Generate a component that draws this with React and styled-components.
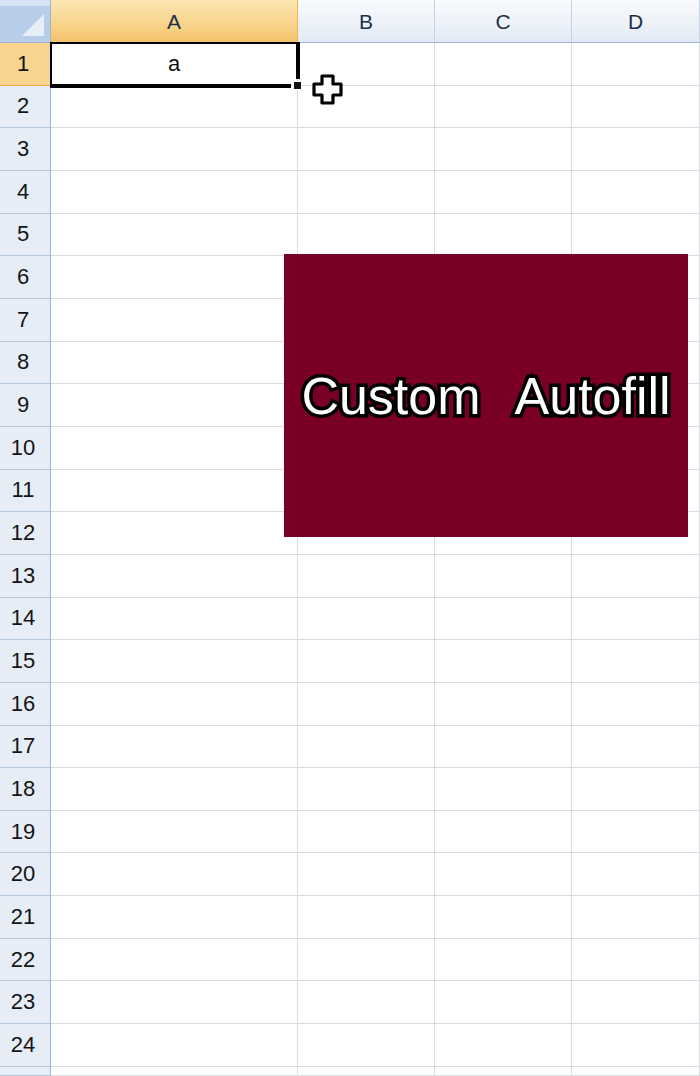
import React from "react";
import styled, { createGlobalStyle } from "styled-components";

const Global = createGlobalStyle`
  html, body {
    margin: 0;
    padding: 0;
    background: #ffffff;
    overflow: hidden;
  }
`;

const Page = styled.div`
  position: relative;
  width: 700px;
  height: 1076px;
  overflow: hidden;
  font-family: "Liberation Sans", Arial, sans-serif;
`;

const Sheet = styled.div`
  display: grid;
  grid-template-columns: 51px 247px 137px 137px 1fr;
  grid-template-rows: 43px repeat(24, 42.667px) 1fr;
  height: 1076px;
`;

const Corner = styled.div`
  position: relative;
  background: linear-gradient(#d6e3f3 0 6px, #b8cde9 6px);
  border-right: 1px solid #9eb6ce;
  border-bottom: 1px solid #9eb6ce;
  box-sizing: border-box;

  &::after {
    content: "";
    position: absolute;
    right: 6px;
    bottom: 6px;
    width: 0;
    height: 0;
    border-left: 22px solid transparent;
    border-bottom: 22px solid #e6eef8;
  }
`;

const ColHead = styled.div`
  display: flex;
  align-items: center;
  justify-content: center;
  box-sizing: border-box;
  border-right: 1px solid ${(p) => (p.$active ? "#f2b24e" : "#c5d2e2")};
  border-bottom: 1px solid ${(p) => (p.$active ? "#f0a63a" : "#9eb6ce")};
  background: ${(p) =>
    p.$active
      ? "linear-gradient(#fbe6b4, #f8d58c 55%, #f4c36a)"
      : "linear-gradient(#f9fbfd, #edf2f9 55%, #e2eaf5)"};
  color: #1c2f4a;
  font-size: 21px;
  padding-top: 2px;
`;

const RowHead = styled.div`
  display: flex;
  align-items: center;
  justify-content: center;
  box-sizing: border-box;
  padding-right: 4px;
  border-right: 1px solid ${(p) => (p.$active ? "#f0a63a" : "#9eb6ce")};
  border-bottom: 1px solid ${(p) => (p.$active ? "#f0a63a" : "#b5c8dc")};
  background: ${(p) => (p.$active ? "#f8d48e" : "#e6edf7")};
  color: #151515;
  font-size: 22px;
`;

const Cell = styled.div`
  position: relative;
  display: flex;
  align-items: center;
  justify-content: center;
  box-sizing: border-box;
  border-right: 1px solid #d9dde3;
  border-bottom: 1px solid #d9dde3;
  background: #ffffff;
  color: #111;
  font-size: 22px;
`;

const Selection = styled.div`
  position: absolute;
  z-index: 2;
  left: -1px;
  top: -1px;
  right: -3px;
  bottom: -3px;
  border-left: 2px solid #000;
  border-top: 2px solid #000;
  pointer-events: none;

  &::before {
    content: "";
    position: absolute;
    right: 0;
    top: -2px;
    width: 4px;
    bottom: 9px;
    background: #000;
  }

  &::after {
    content: "";
    position: absolute;
    left: -2px;
    bottom: 0;
    height: 4px;
    right: 9px;
    background: #000;
  }
`;

const FillHandle = styled.div`
  position: absolute;
  right: -2px;
  bottom: -2px;
  width: 7px;
  height: 7px;
  background: #111;
  border: 1px solid #fff;
`;

const Cursor = styled.svg`
  position: absolute;
  z-index: 3;
  left: 311px;
  top: 73px;
`;

const Banner = styled.div`
  position: absolute;
  z-index: 3;
  left: 284px;
  top: 254px;
  width: 404px;
  height: 283px;
  background: #790024;
  display: flex;
  align-items: center;
  justify-content: center;
  gap: 34px;
  box-sizing: border-box;
`;

const BannerWord = styled.span`
  font-family: "Liberation Sans", Arial, sans-serif;
  font-size: 52px;
  color: #fff;
  -webkit-text-stroke: 7px #000;
  paint-order: stroke fill;
`;

const columns = ["A", "B", "C", "D"];

export default function App() {
  const rows = Array.from({ length: 25 }, (_, i) => i + 1);
  return (
    <Page>
      <Global />
      <Sheet>
        <Corner />
        {columns.map((c, i) => (
          <ColHead key={c} $active={i === 0}>
            {c}
          </ColHead>
        ))}
        {rows.map((r) => (
          <React.Fragment key={r}>
            <RowHead $active={r === 1}>{r <= 24 ? r : ""}</RowHead>
            {columns.map((c) => (
              <Cell key={c}>
                {r === 1 && c === "A" && (
                  <>
                    a
                    <Selection>
                      <FillHandle />
                    </Selection>
                  </>
                )}
              </Cell>
            ))}
          </React.Fragment>
        ))}
      </Sheet>
      <Cursor width="34" height="34" viewBox="0 0 34 34">
        <path
          d="M11 3 H22 V11 H30 V22 H22 V30 H11 V22 H3 V11 H11 Z"
          fill="#fff"
          stroke="#000"
          strokeWidth="3.2"
          strokeLinejoin="round"
        />
      </Cursor>
      <Banner>
        <BannerWord>Custom</BannerWord>
        <BannerWord>Autofill</BannerWord>
      </Banner>
    </Page>
  );
}
